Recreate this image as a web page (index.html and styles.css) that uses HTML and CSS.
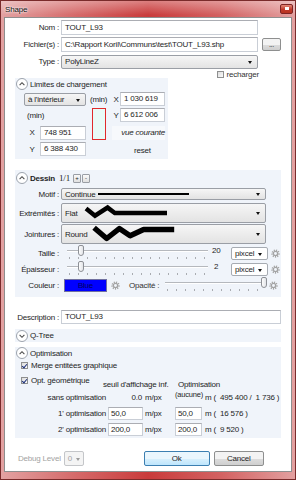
FILE: index.html
```
<!DOCTYPE html>
<html lang="fr">

<head>
    <meta charset="UTF-8">
    <title>Shape</title>
    <link rel="stylesheet" href="styles.css">
</head>

<body>
    <div class="window">
        <div class="titlebar">
            <span class="title">Shape</span>
            <span class="close"><i></i></span>
        </div>
        <div class="client">

            <div class="row first">
                <span class="lbl">Nom :</span>
                <div class="field w197">TOUT_L93</div>
            </div>
            <div class="row">
                <span class="lbl">Fichier(s) :</span>
                <div class="field w197">C:\Rapport Koril\Communs\test\TOUT_L93.shp</div>
                <div class="btn dots">...</div>
            </div>
            <div class="row">
                <span class="lbl">Type :</span>
                <div class="combo w197 type">PolyLineZ<span class="arrow"></span></div>
            </div>
            <div class="recharger"><span class="check"></span>recharger</div>

            <!-- limites -->
            <div class="panel limits">
                <div class="phead">
                    <svg class="toggle" viewBox="0 0 12 12"><circle cx="6" cy="6" r="5.5" fill="#fff" stroke="#9ca3ad"/><path d="M3.6 7.1 L6 4.7 L8.4 7.1" fill="none" stroke="#4a4a4a" stroke-width="1.1"/></svg>
                    <span>Limites de chargement</span>
                </div>
                <div class="lgrid">
                    <div class="combo l-sel">à l'intérieur<span class="arrow"></span></div>
                    <span class="l-min1">(min)</span>
                    <span class="l-x1 axis">X</span>
                    <div class="field l-in1">1 030 619</div>
                    <span class="l-min2">(min)</span>
                    <div class="l-box"></div>
                    <span class="l-y1 axis">Y</span>
                    <div class="field l-in2">6 612 006</div>
                    <span class="l-x2 axis">X</span>
                    <div class="field l-in3">748 951</div>
                    <span class="l-vue">vue courante</span>
                    <span class="l-y2 axis">Y</span>
                    <div class="field l-in4">6 388 430</div>
                    <span class="l-reset">reset</span>
                </div>
            </div>

            <!-- dessin -->
            <div class="panel dessin">
                <div class="phead dhead">
                    <svg class="toggle" viewBox="0 0 12 12"><circle cx="6" cy="6" r="5.5" fill="#fff" stroke="#9ca3ad"/><path d="M3.6 7.1 L6 4.7 L8.4 7.1" fill="none" stroke="#4a4a4a" stroke-width="1.1"/></svg>
                    <b>Dessin</b>
                    <span class="count">1/1</span>
                    <span class="mini">+</span>
                    <span class="mini">-</span>
                </div>
                <div class="drow motif">
                    <span class="dlbl">Motif :</span>
                    <div class="combo w205 h12">Continue<span class="solid"></span><span class="arrow"></span></div>
                </div>
                <div class="drow ext">
                    <span class="dlbl">Extrémités :</span>
                    <div class="combo w205 h20">Flat
                        <svg class="zig" viewBox="0 0 120 20"><polyline points="20,5 30,13 44,4 52,10 110,10" fill="none" stroke="#000" stroke-width="5" stroke-linejoin="miter"/></svg>
                        <span class="arrow"></span>
                    </div>
                </div>
                <div class="drow joint">
                    <span class="dlbl">Jointures :</span>
                    <div class="combo w205 h20">Round
                        <svg class="zig" viewBox="0 0 120 20"><polyline points="29,3 43,15 57,4 69,12 84,5 118,5" fill="none" stroke="#000" stroke-width="6" stroke-linejoin="round"/></svg>
                        <span class="arrow"></span>
                    </div>
                </div>
                <div class="drow slide">
                    <span class="dlbl">Taille :</span>
                    <div class="slider s141"><span class="thumb t-taille"></span></div>
                    <span class="val">20</span>
                    <div class="combo unit">pixcel<span class="arrow"></span></div>
                    <svg class="gear" viewBox="0 0 10 10"><circle cx="5" cy="5" r="3.7" fill="none" stroke="#a3a3a3" stroke-width="1.8" stroke-dasharray="1.3 1.2"/><circle cx="5" cy="5" r="2.3" fill="none" stroke="#a3a3a3" stroke-width="1.3"/></svg>
                </div>
                <div class="drow slide">
                    <span class="dlbl">Épaisseur :</span>
                    <div class="slider s141"><span class="thumb t-taille"></span></div>
                    <span class="val v2">2</span>
                    <div class="combo unit">pixcel<span class="arrow"></span></div>
                    <svg class="gear" viewBox="0 0 10 10"><circle cx="5" cy="5" r="3.7" fill="none" stroke="#a3a3a3" stroke-width="1.8" stroke-dasharray="1.3 1.2"/><circle cx="5" cy="5" r="2.3" fill="none" stroke="#a3a3a3" stroke-width="1.3"/></svg>
                </div>
                <div class="drow slide">
                    <span class="dlbl">Couleur :</span>
                    <div class="color">Blue</div>
                    <svg class="gear g-col" viewBox="0 0 10 10"><circle cx="5" cy="5" r="3.7" fill="none" stroke="#a3a3a3" stroke-width="1.8" stroke-dasharray="1.3 1.2"/><circle cx="5" cy="5" r="2.3" fill="none" stroke="#a3a3a3" stroke-width="1.3"/></svg>
                    <span class="opa">Opacité :</span>
                    <div class="slider s103"><span class="thumb t-opa"></span></div>
                    <svg class="gear" viewBox="0 0 10 10"><circle cx="5" cy="5" r="3.7" fill="none" stroke="#a3a3a3" stroke-width="1.8" stroke-dasharray="1.3 1.2"/><circle cx="5" cy="5" r="2.3" fill="none" stroke="#a3a3a3" stroke-width="1.3"/></svg>
                </div>
            </div>

            <div class="row desc">
                <span class="lbl">Description :</span>
                <div class="field w220">TOUT_L93</div>
            </div>

            <div class="panel qtree">
                <div class="phead">
                    <svg class="toggle" viewBox="0 0 12 12"><circle cx="6" cy="6" r="5.5" fill="#fff" stroke="#9ca3ad"/><path d="M3.6 4.9 L6 7.3 L8.4 4.9" fill="none" stroke="#4a4a4a" stroke-width="1.1"/></svg>
                    <span>Q-Tree</span>
                </div>
            </div>

            <!-- optimisation -->
            <div class="panel optim">
                <div class="phead">
                    <svg class="toggle" viewBox="0 0 12 12"><circle cx="6" cy="6" r="5.5" fill="#fff" stroke="#9ca3ad"/><path d="M3.6 7.1 L6 4.7 L8.4 7.1" fill="none" stroke="#4a4a4a" stroke-width="1.1"/></svg>
                    <span>Optimisation</span>
                </div>
                <div class="crow merge"><span class="check on"></span>Merge entitées graphique</div>
                <div class="crow geo">
                    <span class="geo-lbl"><span class="check on"></span>Opt. géométrique</span>
                    <span class="colh seuil">seuil d'affichage inf.</span>
                    <span class="colh">Optimisation</span>
                </div>
                <div class="ogrid">
                    <span class="olbl">sans optimisation</span>
                    <span class="onum">0.0</span>
                    <span class="ounit">m/px</span>
                    <span class="none">(aucune)</span>
                    <span class="ores">m (&nbsp; 495 400 /&nbsp; 1 736 )</span>

                    <span class="olbl">1' optimisation</span>
                    <div class="field">50,0</div>
                    <span class="ounit">m/px</span>
                    <div class="field">50,0</div>
                    <span class="ores">m (&nbsp; 16 576 )</span>

                    <span class="olbl">2' optimisation</span>
                    <div class="field">200,0</div>
                    <span class="ounit">m/px</span>
                    <div class="field">200,0</div>
                    <span class="ores">m (&nbsp; 9 520 )</span>
                </div>
            </div>

            <div class="footer">
                <span class="debug">Debug Level</span>
                <div class="combo dis">0<span class="arrow"></span></div>
                <div class="btn ok">Ok</div>
                <div class="btn cancel">Cancel</div>
            </div>

        </div>
    </div>
</body>

</html>
```

FILE: styles.css
```
body {
    margin: 0;
    font-family: "Liberation Sans", Arial, sans-serif;
    font-size: 8px;
    letter-spacing: -0.2px;
    color: #1e1e1e;
}

.window {
    width: 296px;
    height: 480px;
    box-sizing: border-box;
    border: 1px solid #7a2b2b;
    display: flex;
    flex-direction: column;
    background:
        linear-gradient(180deg, rgba(255, 255, 255, 0.35), rgba(255, 255, 255, 0) 14px),
        linear-gradient(90deg, #e3a2a2 0%, #d56a6a 25%, #c93b3b 50%, #d36262 75%, #e3a0a0 100%);
}

.titlebar {
    height: 16px;
    display: flex;
    align-items: center;
    justify-content: space-between;
    padding: 0 2px 0 4px;
}

.title {
    font-size: 8px;
    color: #111;
    text-shadow: 0 0 3px #fff, 0 0 2px #fff;
}

.close {
    width: 11px;
    height: 8px;
    margin-top: -1px;
    border: 1px solid #7e2323;
    border-radius: 2px;
    background: linear-gradient(#e48a7a, #c0392b 55%, #b8321f);
    display: flex;
    align-items: center;
    justify-content: center;
}

.close i {
    width: 4px;
    height: 3px;
    background: #fff;
}

.client {
    flex: 1;
    margin: 0 3px 7px 3px;
    border: 1px solid #8e8e8e;
    background: #fff;
}

/* rows */
.row {
    display: flex;
    align-items: center;
    height: 15px;
    margin-bottom: 2px;
}

.row.first {
    margin-top: 2px;
}

.lbl {
    width: 54px;
    text-align: right;
    margin-right: 2px;
    white-space: nowrap;
}

.field {
    height: 14px;
    box-sizing: border-box;
    border: 1px solid #c9ced6;
    border-top-color: #abadb3;
    background: #fff;
    padding-left: 3px;
    line-height: 12px;
    white-space: nowrap;
    overflow: hidden;
}

.row .field {
    height: 15px;
    line-height: 13px;
}

.w197 {
    width: 197px;
}

.w205 {
    width: 205px;
}

.w220 {
    width: 220px;
}

.combo {
    position: relative;
    box-sizing: border-box;
    height: 14px;
    border: 1px solid #9a9ea5;
    border-radius: 2px;
    background: linear-gradient(#f6f6f6, #e3e3e3);
    padding-left: 3px;
    display: flex;
    align-items: center;
    white-space: nowrap;
}

.combo .arrow {
    position: absolute;
    right: 5px;
    top: 50%;
    margin-top: -1px;
    border-left: 2px solid transparent;
    border-right: 2px solid transparent;
    border-top: 3px solid #111;
}

.btn {
    box-sizing: border-box;
    border: 1px solid #8e8f8f;
    border-radius: 2px;
    background: linear-gradient(#f3f3f3 50%, #dddddd 50%, #cfcfcf);
    display: flex;
    align-items: center;
    justify-content: center;
}

.dots {
    width: 19px;
    height: 13px;
    margin-left: 4px;
    font-size: 7px;
}

.recharger {
    height: 7px;
    display: flex;
    align-items: center;
    justify-content: flex-end;
    padding-right: 32px;
    color: #333;
}

.check {
    width: 7px;
    height: 7px;
    box-sizing: border-box;
    border: 1px solid #8e8f8f;
    background: linear-gradient(135deg, #dcdcdc, #fbfbfb);
    margin-right: 3px;
    position: relative;
}

.check.on::after {
    content: "";
    position: absolute;
    left: 1px;
    top: 0px;
    width: 2px;
    height: 4px;
    border-right: 1.3px solid #1b2f7a;
    border-bottom: 1.3px solid #1b2f7a;
    transform: rotate(40deg);
}

/* panels */
.panel {
    margin-left: 10px;
    background: #f0f4fa;
}

.phead {
    height: 12px;
    display: flex;
    align-items: center;
}

.toggle {
    width: 12px;
    height: 12px;
    margin: 0 2px 0 1px;
}

.limits {
    width: 153px;
    padding-bottom: 3px;
}

.lgrid {
    display: grid;
    grid-template-columns: 16px 46px 26px 8px 45px;
    grid-template-rows: 14px 14px 16px 14px;
    row-gap: 2px;
    margin: 2px 0 0 9px;
    align-items: center;
}

.lgrid .field {
    align-self: stretch;
}

.l-sel {
    grid-column: 1 / 3;
    grid-row: 1;
    height: 13px;
    align-self: end;
}

.l-min1 {
    grid-column: 3;
    grid-row: 1;
    padding-left: 4px;
}

.axis {
    text-align: center;
}

.l-x1 {
    grid-column: 4;
    grid-row: 1;
}

.l-in1 {
    grid-column: 5;
    grid-row: 1;
}

.l-min2 {
    grid-column: 1 / 3;
    grid-row: 2;
    padding-left: 3px;
}

.l-box {
    grid-column: 3;
    grid-row: 2 / 4;
    align-self: stretch;
    margin: 0 6px 0 6px;
    border: 1px solid #e02b2b;
    background: #e8fbf7;
}

.l-y1 {
    grid-column: 4;
    grid-row: 2;
}

.l-in2 {
    grid-column: 5;
    grid-row: 2;
}

.l-x2 {
    grid-column: 1;
    grid-row: 3;
    align-self: end;
    line-height: 14px;
}

.l-in3 {
    grid-column: 2;
    grid-row: 3;
    align-self: end !important;
    height: 14px;
}

.l-vue {
    grid-column: 4 / 6;
    grid-row: 3;
    align-self: end;
    height: 14px;
    line-height: 14px;
    font-style: italic;
    text-align: right;
    white-space: nowrap;
    background: #f7f9fc;
}

.l-y2 {
    grid-column: 1;
    grid-row: 4;
}

.l-in4 {
    grid-column: 2;
    grid-row: 4;
}

.l-reset {
    grid-column: 5;
    grid-row: 4;
    text-align: center;
    padding-top: 2px;
}

/* dessin */
.dessin {
    width: 266px;
    margin-top: 11px;
    padding: 2px 0 5px;
}

.dhead {
    height: 12px;
    margin-bottom: 4px;
}

.count {
    font-family: "Liberation Serif", serif;
    font-size: 9px;
    margin: 0 2px 0 4px;
}

.mini {
    width: 6px;
    height: 7px;
    margin-left: 1px;
    border: 1px solid #9a9ea5;
    border-radius: 1px;
    background: linear-gradient(#fafafa, #e0e0e0);
    font-size: 6px;
    line-height: 7px;
    text-align: center;
}

.drow {
    display: flex;
    align-items: center;
}

.dlbl {
    width: 44px;
    margin-right: 2px;
    text-align: right;
    white-space: nowrap;
}

.h12 {
    height: 12px;
}

.h20 {
    height: 20px;
}

.ext {
    margin-top: 3px;
}

.joint {
    margin-top: 1px;
}

.solid {
    width: 91px;
    height: 2px;
    background: #000;
    margin-left: 3px;
}

.zig {
    position: absolute;
    left: 0;
    top: 0;
    width: 120px;
    height: 18px;
}

.slide {
    height: 13px;
    margin-top: 3px;
}

.slider {
    position: relative;
    height: 13px;
    margin-left: 6px;
    flex-shrink: 0;
}

.slider::before {
    content: "";
    position: absolute;
    left: 0;
    right: 0;
    top: 3px;
    height: 1px;
    background: #b5b8bd;
    border-bottom: 1px solid #fff;
}

.slider::after {
    content: "";
    position: absolute;
    left: 2px;
    right: 2px;
    bottom: 1px;
    height: 2px;
    background: repeating-linear-gradient(90deg, #a9acb1 0 1px, transparent 1px 9px);
}

.s141 {
    width: 141px;
}

.s103 {
    width: 101px;
    margin-left: 5px;
}

.thumb {
    position: absolute;
    top: -2px;
    width: 6px;
    height: 11px;
    box-sizing: border-box;
    border: 1px solid #8d9096;
    border-radius: 2px 2px 3px 3px;
    background: linear-gradient(90deg, #fdfdfd, #e2e4e8);
    z-index: 1;
}

.t-taille {
    left: 11px;
}

.t-opa {
    left: 96px;
}

.val {
    width: 19px;
    padding-left: 4px;
    align-self: flex-start;
    margin-top: -1px;
}

.v2 {
    width: 17px;
    padding-left: 6px;
}

.unit {
    width: 37px;
    height: 13px;
    background: #fff;
    border-color: #a6abb2;
}

.gear {
    width: 9px;
    height: 9px;
    margin-left: 3px;
    flex-shrink: 0;
}

.color {
    width: 43px;
    height: 13px;
    box-sizing: border-box;
    margin-left: 3px;
    border: 1px solid #7070a0;
    background: #0000ff;
    color: #000060;
    text-align: center;
    line-height: 11px;
    flex-shrink: 0;
}

.g-col {
    margin-left: 4px;
}

.opa {
    width: 31px;
    margin-left: 9px;
    color: #333;
    white-space: nowrap;
    flex-shrink: 0;
}

/* description */
.desc {
    margin-top: 13px;
    height: 14px;
}

.desc .field {
    height: 14px;
    line-height: 12px;
}

.qtree {
    width: 266px;
    height: 13px;
    margin-top: 5px;
    display: flex;
    align-items: center;
}

.optim {
    width: 266px;
    margin-top: 5px;
    padding-bottom: 2px;
}

.crow {
    display: flex;
    align-items: center;
    padding-left: 6px;
}

.merge {
    height: 8px;
    margin-top: 2px;
}

.geo {
    align-items: flex-start;
    height: 13px;
    margin-top: 7px;
}

.geo-lbl {
    width: 82px;
    display: flex;
    align-items: center;
}

.colh {
    margin-top: 4px;
}

.seuil {
    width: 75px;
}

.ogrid {
    display: grid;
    grid-template-columns: 91px 35px 28px 27px 1fr;
    grid-template-rows: 13px 13px 13px;
    column-gap: 2px;
    row-gap: 3px;
    margin-top: 2px;
    align-items: center;
    white-space: nowrap;
}

.olbl {
    text-align: right;
}

.onum {
    text-align: right;
    padding-right: 1px;
}

.none {
    font-size: 7.5px;
    align-self: start;
    margin-top: -1px;
}

.ores {
    padding-left: 1px;
}

.ogrid .field {
    height: 13px;
    line-height: 11px;
    padding-left: 2px;
}

/* footer */
.footer {
    display: flex;
    align-items: center;
    margin-top: 13px;
    height: 15px;
}

.debug {
    margin-left: 13px;
    color: #a3a3a3;
}

.dis {
    width: 20px;
    height: 15px;
    margin-left: 3px;
    background: #f4f4f4;
    border-color: #c4c6c9;
    color: #a3a3a3;
}

.dis .arrow {
    right: 3px;
    border-top-color: #9a9a9a;
}

.ok {
    width: 66px;
    height: 15px;
    margin-left: 60px;
    border-color: #3c7fb1;
    background: linear-gradient(#eaf6fd 50%, #d9f0fc 50%, #bee6fd);
}

.cancel {
    width: 50px;
    height: 15px;
    margin-left: 4px;
}
```
